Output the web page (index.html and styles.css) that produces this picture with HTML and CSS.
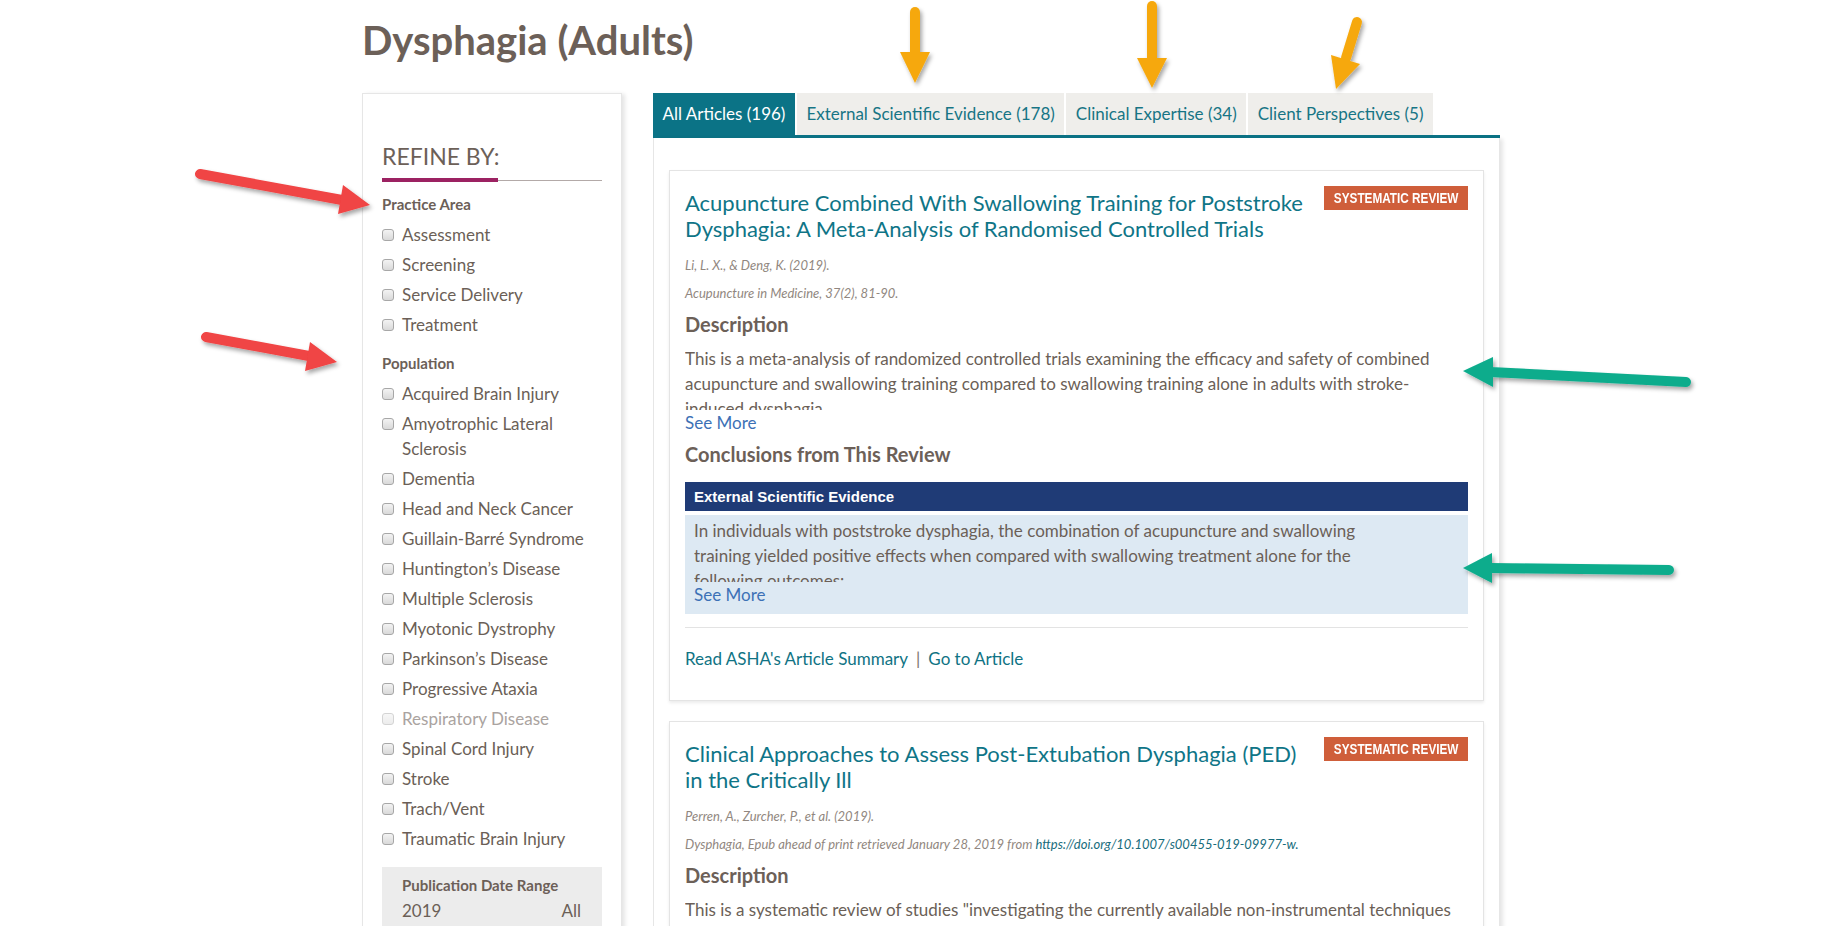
FILE: index.html
```html
<!DOCTYPE html>
<html lang="en">
<head>
<meta charset="utf-8">
<title>Dysphagia (Adults)</title>
<link rel="stylesheet" href="styles.css">
</head>
<body>
<div class="page">
  <h1 class="page-title">Dysphagia (Adults)</h1>
  <div class="layout">
    <aside class="sidebar">
      <h2 class="refine">REFINE BY:</h2>
      <div class="refine-rule"></div>
      <section class="group">
        <h3 class="group-title">Practice Area</h3>
        <ul class="checks">
          <li><input type="checkbox" class="cb"><span>Assessment</span></li>
          <li><input type="checkbox" class="cb"><span>Screening</span></li>
          <li><input type="checkbox" class="cb"><span>Service Delivery</span></li>
          <li><input type="checkbox" class="cb"><span>Treatment</span></li>
        </ul>
      </section>
      <section class="group">
        <h3 class="group-title">Population</h3>
        <ul class="checks">
          <li><input type="checkbox" class="cb"><span>Acquired Brain Injury</span></li>
          <li><input type="checkbox" class="cb"><span>Amyotrophic Lateral Sclerosis</span></li>
          <li><input type="checkbox" class="cb"><span>Dementia</span></li>
          <li><input type="checkbox" class="cb"><span>Head and Neck Cancer</span></li>
          <li><input type="checkbox" class="cb"><span>Guillain-Barré Syndrome</span></li>
          <li><input type="checkbox" class="cb"><span>Huntington’s Disease</span></li>
          <li><input type="checkbox" class="cb"><span>Multiple Sclerosis</span></li>
          <li><input type="checkbox" class="cb"><span>Myotonic Dystrophy</span></li>
          <li><input type="checkbox" class="cb"><span>Parkinson’s Disease</span></li>
          <li><input type="checkbox" class="cb"><span>Progressive Ataxia</span></li>
          <li class="disabled"><input type="checkbox" class="cb" disabled><span>Respiratory Disease</span></li>
          <li><input type="checkbox" class="cb"><span>Spinal Cord Injury</span></li>
          <li><input type="checkbox" class="cb"><span>Stroke</span></li>
          <li><input type="checkbox" class="cb"><span>Trach/Vent</span></li>
          <li><input type="checkbox" class="cb"><span>Traumatic Brain Injury</span></li>
        </ul>
      </section>
      <section class="date-range">
        <h3 class="group-title">Publication Date Range</h3>
        <div class="range"><span>2019</span><span>All</span></div>
        <div class="range-track"></div>
      </section>
    </aside>

    <main class="main">
      <nav class="tabs">
        <a class="tab active">All Articles (196)</a>
        <a class="tab">External Scientific Evidence (178)</a>
        <a class="tab">Clinical Expertise (34)</a>
        <a class="tab">Client Perspectives (5)</a>
      </nav>
      <div class="panel">
        <article class="card">
          <div class="card-head">
            <h2 class="card-title">Acupuncture Combined With Swallowing Training for Poststroke<br>Dysphagia: A Meta-Analysis of Randomised Controlled Trials</h2>
            <div class="badge"><span>SYSTEMATIC REVIEW</span></div>
          </div>
          <p class="cite">Li, L. X., &amp; Deng, K. (2019).</p>
          <p class="cite cite-journal">Acupuncture in Medicine, 37(2), 81-90.</p>
          <h3 class="section-title">Description</h3>
          <p class="clamp">This is a meta-analysis of randomized controlled trials examining the efficacy and safety of combined<br>acupuncture and swallowing training compared to swallowing training alone in adults with stroke-<br>induced dysphagia.</p>
          <a class="see-more">See More</a>
          <h3 class="section-title conclusions">Conclusions from This Review</h3>
          <div class="evidence-bar">External Scientific Evidence</div>
          <div class="evidence-body">
            <p class="clamp">In individuals with poststroke dysphagia, the combination of acupuncture and swallowing<br>training yielded positive effects when compared with swallowing treatment alone for the<br>following outcomes:</p>
            <a class="see-more">See More</a>
          </div>
          <div class="card-links">
            <a class="link">Read ASHA's Article Summary</a><span class="sep">|</span><a class="link">Go to Article</a>
          </div>
        </article>

        <article class="card">
          <div class="card-head">
            <h2 class="card-title">Clinical Approaches to Assess Post-Extubation Dysphagia (PED)<br>in the Critically Ill</h2>
            <div class="badge"><span>SYSTEMATIC REVIEW</span></div>
          </div>
          <p class="cite">Perren, A., Zurcher, P., et al. (2019).</p>
          <p class="cite cite-journal">Dysphagia, Epub ahead of print retrieved January 28, 2019 from <a class="doi">https://doi.org/10.1007/s00455-019-09977-w.</a></p>
          <h3 class="section-title">Description</h3>
          <p class="clamp">This is a systematic review of studies "investigating the currently available non-instrumental techniques<br>for assessing post-extubation dysphagia in adult ICU patients."</p>
          <a class="see-more">See More</a>
        </article>
      </div>
    </main>
  </div>
</div>

<svg class="annotations" width="1831" height="926" viewBox="0 0 1831 926" aria-hidden="true">
  <defs>
    <filter id="sh" x="-30%" y="-30%" width="160%" height="160%">
      <feDropShadow dx="2" dy="3" stdDeviation="2" flood-color="#000" flood-opacity="0.35"/>
    </filter>
  </defs>
  <g filter="url(#sh)">
    <g class="arrow-orange">
      <line x1="915" y1="12" x2="915" y2="56"/>
      <polygon points="900,52 930,52 915,83"/>
      <line x1="1152" y1="6" x2="1152" y2="62"/>
      <polygon points="1137,58 1167,58 1152,88"/>
      <line x1="1357" y1="22" x2="1346" y2="58"/>
      <polygon points="1331,55 1360,64 1336,89"/>
    </g>
    <g class="arrow-red">
      <line x1="200" y1="174" x2="342" y2="200"/>
      <polygon points="343,185 338,214 370,205"/>
      <line x1="206" y1="337" x2="309" y2="356"/>
      <polygon points="310,342 305,371 337,362"/>
    </g>
    <g class="arrow-green">
      <line x1="1686" y1="382" x2="1490" y2="372"/>
      <polygon points="1493,357 1493,387 1463,371"/>
      <line x1="1669" y1="570" x2="1490" y2="568"/>
      <polygon points="1492,553 1492,583 1463,568"/>
    </g>
  </g>
</svg>
</body>
</html>
```

FILE: styles.css
```css
* { box-sizing: border-box; }

html, body {
  margin: 0;
  padding: 0;
  overflow: hidden;
  background: #fff;
}

body {
  position: relative;
  font-family: Lato, "Open Sans", "Liberation Sans", Arial, sans-serif;
  color: #6b5f57;
}

a { text-decoration: none; cursor: pointer; }

.page {
  margin-left: 362px;
  width: 1138px;
}

.page-title {
  margin: 0 0 29px;
  padding-top: 16px;
  font-size: 40px;
  line-height: 48px;
  font-weight: 700;
  color: #6c6058;
}

.layout {
  display: flex;
  align-items: flex-start;
  gap: 31px;
}

/* ---------- Sidebar ---------- */
.sidebar {
  flex: none;
  width: 260px;
  min-height: 900px;
  padding: 48px 19px 0;
  border: 1px solid #e6e6e6;
  box-shadow: 3px 1px 4px rgba(0, 0, 0, 0.1);
}

.refine {
  margin: 0;
  font-size: 23px;
  line-height: 28px;
  font-weight: 400;
  color: #6c6058;
}

.refine-rule {
  height: 4px;
  margin-top: 8px;
  background:
    linear-gradient(#9c2262, #9c2262) no-repeat 0 0 / 116px 4px,
    linear-gradient(#b3aaa8, #b3aaa8) no-repeat 0 2px / 100% 1px;
}

.group {
  margin-top: 12px;
  margin-bottom: 16px;
}

.group + .group { margin-top: 0; }

.group-title {
  margin: 0;
  font-size: 15px;
  line-height: 20px;
  font-weight: 700;
  color: #6c6058;
}

.checks {
  list-style: none;
  margin: 8px 0 0;
  padding: 0;
  display: flex;
  flex-direction: column;
  gap: 5px;
}

.checks li {
  display: flex;
  align-items: flex-start;
  gap: 8px;
  font-size: 17px;
  line-height: 25px;
  color: #6b5f57;
}

.cb {
  appearance: none;
  -webkit-appearance: none;
  flex: none;
  width: 12px;
  height: 12px;
  margin: 7px 0 0;
  border: 1px solid #a7a7a7;
  border-radius: 3px;
  background: linear-gradient(#f3f3f3, #d9d9d9);
}

.checks li.disabled { color: #aaa3a0; }
.checks li.disabled .cb {
  border-color: #d4d4d4;
  background: linear-gradient(#f7f7f7, #ececec);
}

.date-range {
  background: #ececec;
  padding: 8px 21px 30px 20px;
}

.range {
  display: flex;
  justify-content: space-between;
  margin-top: 3px;
  font-size: 17px;
  line-height: 25px;
  color: #6b5f57;
}

.range-track {
  height: 4px;
  margin-top: 14px;
  background: #cfcfcf;
}

/* ---------- Main ---------- */
.main {
  flex: 1;
  min-width: 0;
}

.tabs {
  display: flex;
  gap: 2px;
  border-bottom: 3px solid #0b7386;
}

.tab {
  height: 42px;
  line-height: 42px;
  padding: 0 9.5px;
  font-size: 17px;
  white-space: nowrap;
  background: #efeeeb;
  color: #177585;
}

.tab.active {
  background: #0b7386;
  color: #fff;
}

.panel {
  min-height: 800px;
  padding: 32px 15px 0;
  border: 1px solid #e6e6e6;
  border-top: none;
  box-shadow: 4px 0 4px -1px rgba(0, 0, 0, 0.1);
}

.card {
  padding: 15px;
  margin-bottom: 20px;
  border: 1px solid #e4e4e4;
  box-shadow: 0 2px 3px rgba(0, 0, 0, 0.08);
}

.card-head {
  display: flex;
  align-items: flex-start;
  justify-content: space-between;
  gap: 20px;
}

.card-title {
  margin: 4px 0 0;
  font-size: 22px;
  line-height: 26px;
  font-weight: 400;
  color: #0f7587;
  white-space: nowrap;
}

.badge {
  flex: none;
  width: 144px;
  height: 24px;
  display: flex;
  align-items: center;
  justify-content: center;
  background: #cf5e3a;
}

.badge span {
  display: inline-block;
  font-family: "Liberation Sans", Arial, sans-serif;
  font-weight: 700;
  font-size: 14px;
  line-height: 16px;
  color: #fff;
  white-space: nowrap;
  transform: scaleX(0.84);
}

.cite {
  margin: 14px 0 0;
  font-size: 13px;
  line-height: 18px;
  font-style: italic;
  color: #918780;
}

.cite-journal { margin-top: 10px; }

.doi { color: #176c7c; }

.section-title {
  margin: 9px 0 0;
  font-size: 20px;
  line-height: 26px;
  font-weight: 700;
  color: #6c6058;
}

.section-title.conclusions { margin-top: 6px; }

.clamp {
  margin: 9px 0 0;
  max-height: 64px;
  overflow: hidden;
  font-size: 17px;
  line-height: 25px;
  color: #6b5f57;
}

.see-more {
  display: block;
  font-size: 17px;
  line-height: 25px;
  color: #3c71b6;
}

.evidence-bar {
  margin-top: 15px;
  height: 29px;
  padding-left: 9px;
  line-height: 29px;
  font-family: "Liberation Sans", Arial, sans-serif;
  font-weight: 700;
  font-size: 15px;
  color: #fff;
  background: #1f3b76;
}

.evidence-body {
  margin-top: 4px;
  padding: 3px 9px 7px;
  background: #dde9f3;
}

.evidence-body .clamp { margin-top: 0; }

.card-links {
  margin-top: 13px;
  padding-top: 18px;
  margin-bottom: 14px;
  border-top: 1px solid #e3e3e3;
  font-size: 17px;
  line-height: 25px;
}

.link { color: #107384; }

.sep {
  margin: 0 8px;
  color: #7d726b;
}

/* ---------- Annotation arrows (overlay) ---------- */
.annotations {
  position: absolute;
  left: 0;
  top: 0;
  pointer-events: none;
}

.annotations line {
  stroke-width: 10;
  stroke-linecap: round;
}

.arrow-orange line { stroke: #f6a80c; }
.arrow-orange polygon { fill: #f6a80c; }
.arrow-red line { stroke: #f04444; }
.arrow-red polygon { fill: #f04444; }
.arrow-green line { stroke: #0aac8c; }
.arrow-green polygon { fill: #0aac8c; }
```
